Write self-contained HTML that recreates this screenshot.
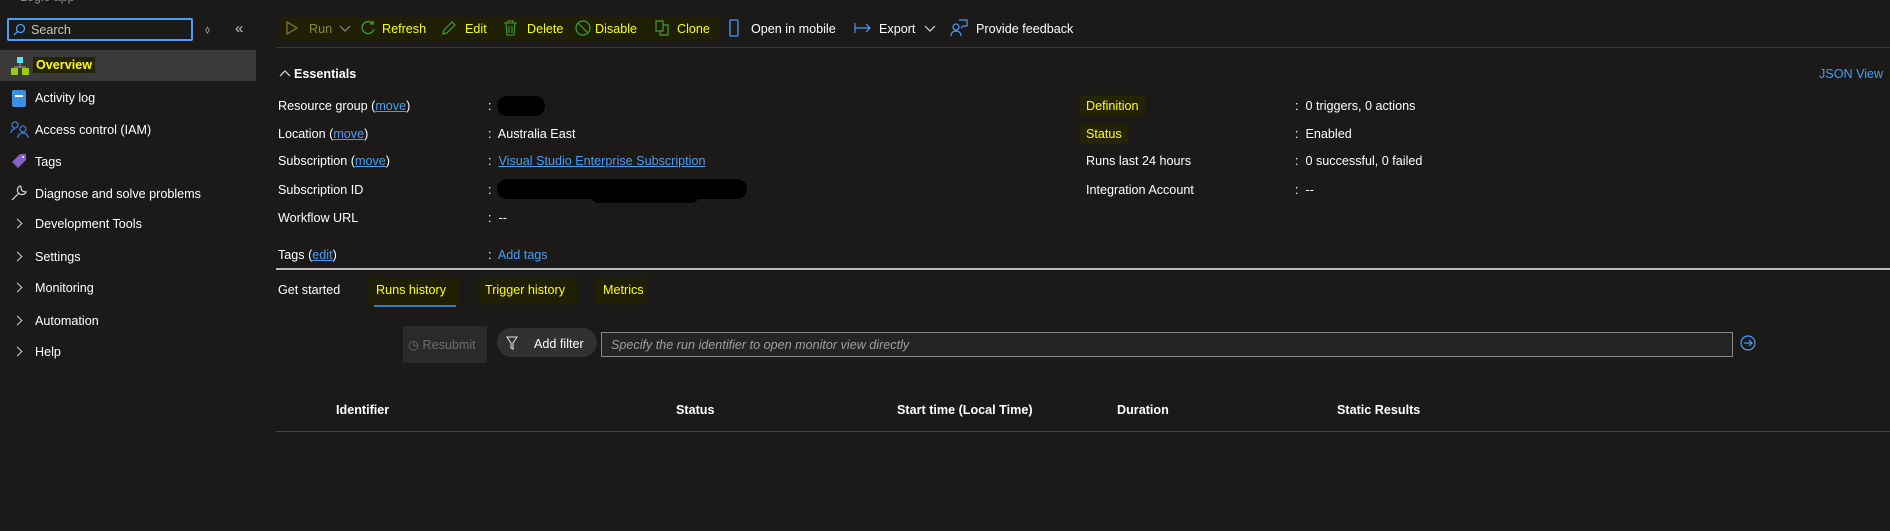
<!DOCTYPE html>
<html><head><meta charset="utf-8"><style>
*{margin:0;padding:0;box-sizing:border-box}
body{width:1890px;height:531px;background:#1b1a19;font-family:"Liberation Sans",sans-serif;font-size:12.6px;color:#fff;position:relative;overflow:hidden}
.a{position:absolute;white-space:nowrap;line-height:16px}
.y{color:#ffff00}
.lk{color:#479ef5}
.u{text-decoration:underline}
.hl{background:#242400}
svg{position:absolute}
.ch{position:absolute;left:14px;width:7px;height:7px;border-right:1.2px solid #ccc;border-top:1.2px solid #ccc;transform:rotate(45deg)}
</style></head><body>
<div class="a" style="left:20px;top:-11px;color:#8a8886">Logic app</div>
<!-- search -->
<div style="position:absolute;left:7px;top:18px;width:186px;height:23px;border:2px solid #479ef5;border-radius:2px;background:#1b1a19"></div>
<svg style="left:12px;top:23px" width="14" height="14" viewBox="0 0 14 14"><circle cx="8.5" cy="5.5" r="4" fill="none" stroke="#479ef5" stroke-width="1.3"/><path d="M5.5 8.5L2 12" stroke="#479ef5" stroke-width="1.3"/></svg>
<div class="a" style="left:31px;top:22px;color:#c8c6c4">Search</div>
<div class="a" style="left:205px;top:22px;color:#c8c6c4;font-size:11px">⬨</div>
<div class="a" style="left:235px;top:21px;color:#c8c6c4;font-size:15px">«</div>
<!-- sidebar -->
<div style="position:absolute;left:0;top:50px;width:256px;height:31px;background:#3b3a39"></div>
<svg style="left:11px;top:57px" width="18" height="18" viewBox="0 0 18 18"><rect x="6" y="0" width="6" height="6" fill="#50e6ff"/><path d="M9 6v4M3 10h12" stroke="#a0a0a0"/><rect x="0" y="11" width="7" height="7" fill="#9bcb1a"/><rect x="11" y="11" width="7" height="7" fill="#9bcb1a"/></svg>
<div class="a y hl" style="left:33px;top:57px;font-weight:bold;padding:0 3px">Overview</div>
<svg style="left:12px;top:90px" width="14" height="17" viewBox="0 0 14 17"><rect width="14" height="17" rx="2" fill="#3b8fe0"/><rect x="3" y="5" width="8" height="2" fill="#fff"/></svg>
<div class="a" style="left:35px;top:90px">Activity log</div>
<svg style="left:10px;top:121px" width="20" height="18" viewBox="0 0 20 18"><circle cx="5" cy="4" r="3" fill="none" stroke="#3a7bd5" stroke-width="1.3"/><circle cx="13" cy="8" r="3" fill="none" stroke="#3a7bd5" stroke-width="1.3"/><path d="M1 12c0-3 2-4 4-4M8 17c0-3 2-5 5-5s5 2 5 5" fill="none" stroke="#3a7bd5" stroke-width="1.3"/></svg>
<div class="a" style="left:35px;top:122px">Access control (IAM)</div>
<svg style="left:11px;top:153px" width="16" height="16" viewBox="0 0 16 16"><path d="M9 1h6v6l-8 8-6-6z" fill="#8661c5"/><circle cx="12" cy="4" r="1" fill="#fff"/></svg>
<div class="a" style="left:35px;top:154px">Tags</div>
<svg style="left:10px;top:184px" width="18" height="18" viewBox="0 0 18 18"><path d="M2 16l7-7M10 2a4.5 4.5 0 1 0 6 6l-3-.5-1.5-1.5L11 3z" fill="none" stroke="#ddd" stroke-width="1.2"/></svg>
<div class="a" style="left:35px;top:186px">Diagnose and solve problems</div>
<div class="ch" style="top:220px"></div><div class="a" style="left:35px;top:216px">Development Tools</div>
<div class="ch" style="top:253px"></div><div class="a" style="left:35px;top:249px">Settings</div>
<div class="ch" style="top:284px"></div><div class="a" style="left:35px;top:280px">Monitoring</div>
<div class="ch" style="top:317px"></div><div class="a" style="left:35px;top:313px">Automation</div>
<div class="ch" style="top:348px"></div><div class="a" style="left:35px;top:344px">Help</div>
<!-- toolbar -->
<div style="position:absolute;left:280px;top:17px;width:440px;height:24px;background:#1f1f05"></div>
<svg style="left:286px;top:21px" width="12" height="14" viewBox="0 0 12 14"><path d="M1 1l10 6-10 6z" fill="none" stroke="#8a7a20" stroke-width="1.2"/></svg>
<div class="a" style="left:309px;top:21px;color:#8a8a30">Run</div>
<svg style="left:339px;top:25px" width="12" height="8" viewBox="0 0 12 8"><path d="M1 1l5 5 5-5" fill="none" stroke="#8a8886" stroke-width="1.2"/></svg>
<svg style="left:360px;top:20px" width="16" height="16" viewBox="0 0 16 16"><path d="M13 4A6 6 0 1 0 14 9M13 1v3h-3" fill="none" stroke="#3fa030" stroke-width="1.3"/></svg>
<div class="a y" style="left:382px;top:21px">Refresh</div>
<svg style="left:442px;top:21px" width="14" height="14" viewBox="0 0 14 14"><path d="M1 13l1-4 8-8 3 3-8 8z" fill="none" stroke="#3fa030" stroke-width="1.2"/></svg>
<div class="a y" style="left:465px;top:21px">Edit</div>
<svg style="left:504px;top:20px" width="13" height="16" viewBox="0 0 13 16"><path d="M0 3h13M4 3V1h5v2M2 3l1 12h7l1-12M5 6v7M8 6v7" fill="none" stroke="#3fa030" stroke-width="1.1"/></svg>
<div class="a y" style="left:527px;top:21px">Delete</div>
<svg style="left:575px;top:20px" width="16" height="16" viewBox="0 0 16 16"><circle cx="8" cy="8" r="7" fill="none" stroke="#3fa030" stroke-width="1.2"/><path d="M3 3l10 10" stroke="#3fa030" stroke-width="1.2"/></svg>
<div class="a y" style="left:595px;top:21px">Disable</div>
<svg style="left:655px;top:20px" width="14" height="16" viewBox="0 0 14 16"><path d="M1 1h7v10H1zM5 11v4h8V5h-5" fill="none" stroke="#3fa030" stroke-width="1.2"/></svg>
<div class="a y" style="left:677px;top:21px">Clone</div>
<svg style="left:729px;top:19px" width="10" height="18" viewBox="0 0 10 18"><rect x="1" y="1" width="8" height="16" rx="1" fill="none" stroke="#479ef5" stroke-width="1.3"/></svg>
<div class="a" style="left:751px;top:21px">Open in mobile</div>
<svg style="left:854px;top:22px" width="18" height="12" viewBox="0 0 18 12"><path d="M1 1v10M1 6h15M12 2l4 4-4 4" fill="none" stroke="#479ef5" stroke-width="1.2"/></svg>
<div class="a" style="left:879px;top:21px">Export</div>
<svg style="left:924px;top:25px" width="12" height="8" viewBox="0 0 12 8"><path d="M1 1l5 5 5-5" fill="none" stroke="#ddd" stroke-width="1.2"/></svg>
<svg style="left:950px;top:19px" width="18" height="18" viewBox="0 0 18 18"><circle cx="6" cy="8" r="3" fill="none" stroke="#479ef5" stroke-width="1.2"/><path d="M1 17c0-3 2-5 5-5s5 2 5 5M9 1h8v6h-4l-2 2" fill="none" stroke="#479ef5" stroke-width="1.2"/></svg>
<div class="a" style="left:976px;top:21px">Provide feedback</div>
<div style="position:absolute;left:276px;top:47px;width:1614px;height:1px;background:#3b3a39"></div>
<!-- essentials -->
<svg style="left:279px;top:69px" width="12" height="8" viewBox="0 0 12 8"><path d="M1 7l5-5 5 5" fill="none" stroke="#ddd" stroke-width="1.2"/></svg>
<div class="a" style="left:294px;top:66px;font-weight:bold">Essentials</div>
<div class="a lk" style="left:1819px;top:66px">JSON View</div>
<div class="a" style="left:278px;top:98px">Resource group (<span class="lk u">move</span>)</div>
<div class="a" style="left:488px;top:98px">:</div>
<div style="position:absolute;left:497px;top:96px;width:48px;height:20px;border-radius:10px;background:#000"></div>
<div class="a" style="left:278px;top:126px">Location (<span class="lk u">move</span>)</div>
<div class="a" style="left:488px;top:126px">:&nbsp; Australia East</div>
<div class="a" style="left:278px;top:153px">Subscription (<span class="lk u">move</span>)</div>
<div class="a" style="left:488px;top:153px">:&nbsp; <span class="lk u">Visual Studio Enterprise Subscription</span></div>
<div class="a" style="left:278px;top:182px">Subscription ID</div>
<div class="a" style="left:488px;top:182px">:</div>
<div style="position:absolute;left:497px;top:179px;width:250px;height:20px;border-radius:10px;background:#000"></div>
<div style="position:absolute;left:590px;top:185px;width:110px;height:18px;border-radius:9px;background:#000"></div>
<div class="a" style="left:278px;top:210px">Workflow URL</div>
<div class="a" style="left:488px;top:210px">:&nbsp; --</div>
<div class="a" style="left:278px;top:247px">Tags (<span class="lk u">edit</span>)</div>
<div class="a" style="left:488px;top:247px">:&nbsp; <span class="lk">Add tags</span></div>
<div class="a y hl" style="left:1080px;top:96px;padding:2px 6px 2px 6px">Definition</div>
<div class="a" style="left:1295px;top:98px">:&nbsp; 0 triggers, 0 actions</div>
<div class="a y hl" style="left:1080px;top:124px;padding:2px 6px">Status</div>
<div class="a" style="left:1295px;top:126px">:&nbsp; Enabled</div>
<div class="a" style="left:1086px;top:153px">Runs last 24 hours</div>
<div class="a" style="left:1295px;top:153px">:&nbsp; 0 successful, 0 failed</div>
<div class="a" style="left:1086px;top:182px">Integration Account</div>
<div class="a" style="left:1295px;top:182px">:&nbsp; --</div>
<div style="position:absolute;left:276px;top:268px;width:1614px;height:2px;background:#bdbbb8"></div>
<!-- tabs -->
<div class="a" style="left:278px;top:282px">Get started</div>
<div style="position:absolute;left:369px;top:277px;width:90px;height:28px;background:#1f1f05"></div>
<div class="a y" style="left:376px;top:282px">Runs history</div>
<div style="position:absolute;left:374px;top:305px;width:82px;height:2px;background:#2f7fd0"></div>
<div style="position:absolute;left:478px;top:278px;width:100px;height:26px;background:#1f1f05"></div>
<div class="a y" style="left:485px;top:282px">Trigger history</div>
<div style="position:absolute;left:595px;top:278px;width:52px;height:26px;background:#1f1f05"></div>
<div class="a y" style="left:603px;top:282px">Metrics</div>
<!-- filter row -->
<div style="position:absolute;left:403px;top:326px;width:84px;height:37px;background:#2b2a29"></div>
<div class="a" style="left:408px;top:337px;color:#6e6d6b">◷ Resubmit</div>
<div style="position:absolute;left:497px;top:328px;width:100px;height:29px;border-radius:15px;background:#323130"></div>
<svg style="left:506px;top:336px" width="12" height="14" viewBox="0 0 12 14"><path d="M1 1h10L7 7v6L5 12V7z" fill="none" stroke="#ddd" stroke-width="1.1"/></svg>
<div class="a" style="left:534px;top:336px">Add filter</div>
<div style="position:absolute;left:601px;top:332px;width:1132px;height:25px;border:1px solid #8a8886;background:#252423"></div>
<div class="a" style="left:611px;top:337px;color:#a19f9d;font-style:italic">Specify the run identifier to open monitor view directly</div>
<svg style="left:1740px;top:335px" width="16" height="16" viewBox="0 0 16 16"><circle cx="8" cy="8" r="7" fill="none" stroke="#479ef5" stroke-width="1.2"/><path d="M4 8h8M9 5l3 3-3 3" fill="none" stroke="#479ef5" stroke-width="1.2"/></svg>
<!-- table -->
<div class="a" style="left:336px;top:402px;font-weight:bold">Identifier</div>
<div class="a" style="left:676px;top:402px;font-weight:bold">Status</div>
<div class="a" style="left:897px;top:402px;font-weight:bold">Start time (Local Time)</div>
<div class="a" style="left:1117px;top:402px;font-weight:bold">Duration</div>
<div class="a" style="left:1337px;top:402px;font-weight:bold">Static Results</div>
<div style="position:absolute;left:276px;top:431px;width:1614px;height:1px;background:#484644"></div>
</body></html>
